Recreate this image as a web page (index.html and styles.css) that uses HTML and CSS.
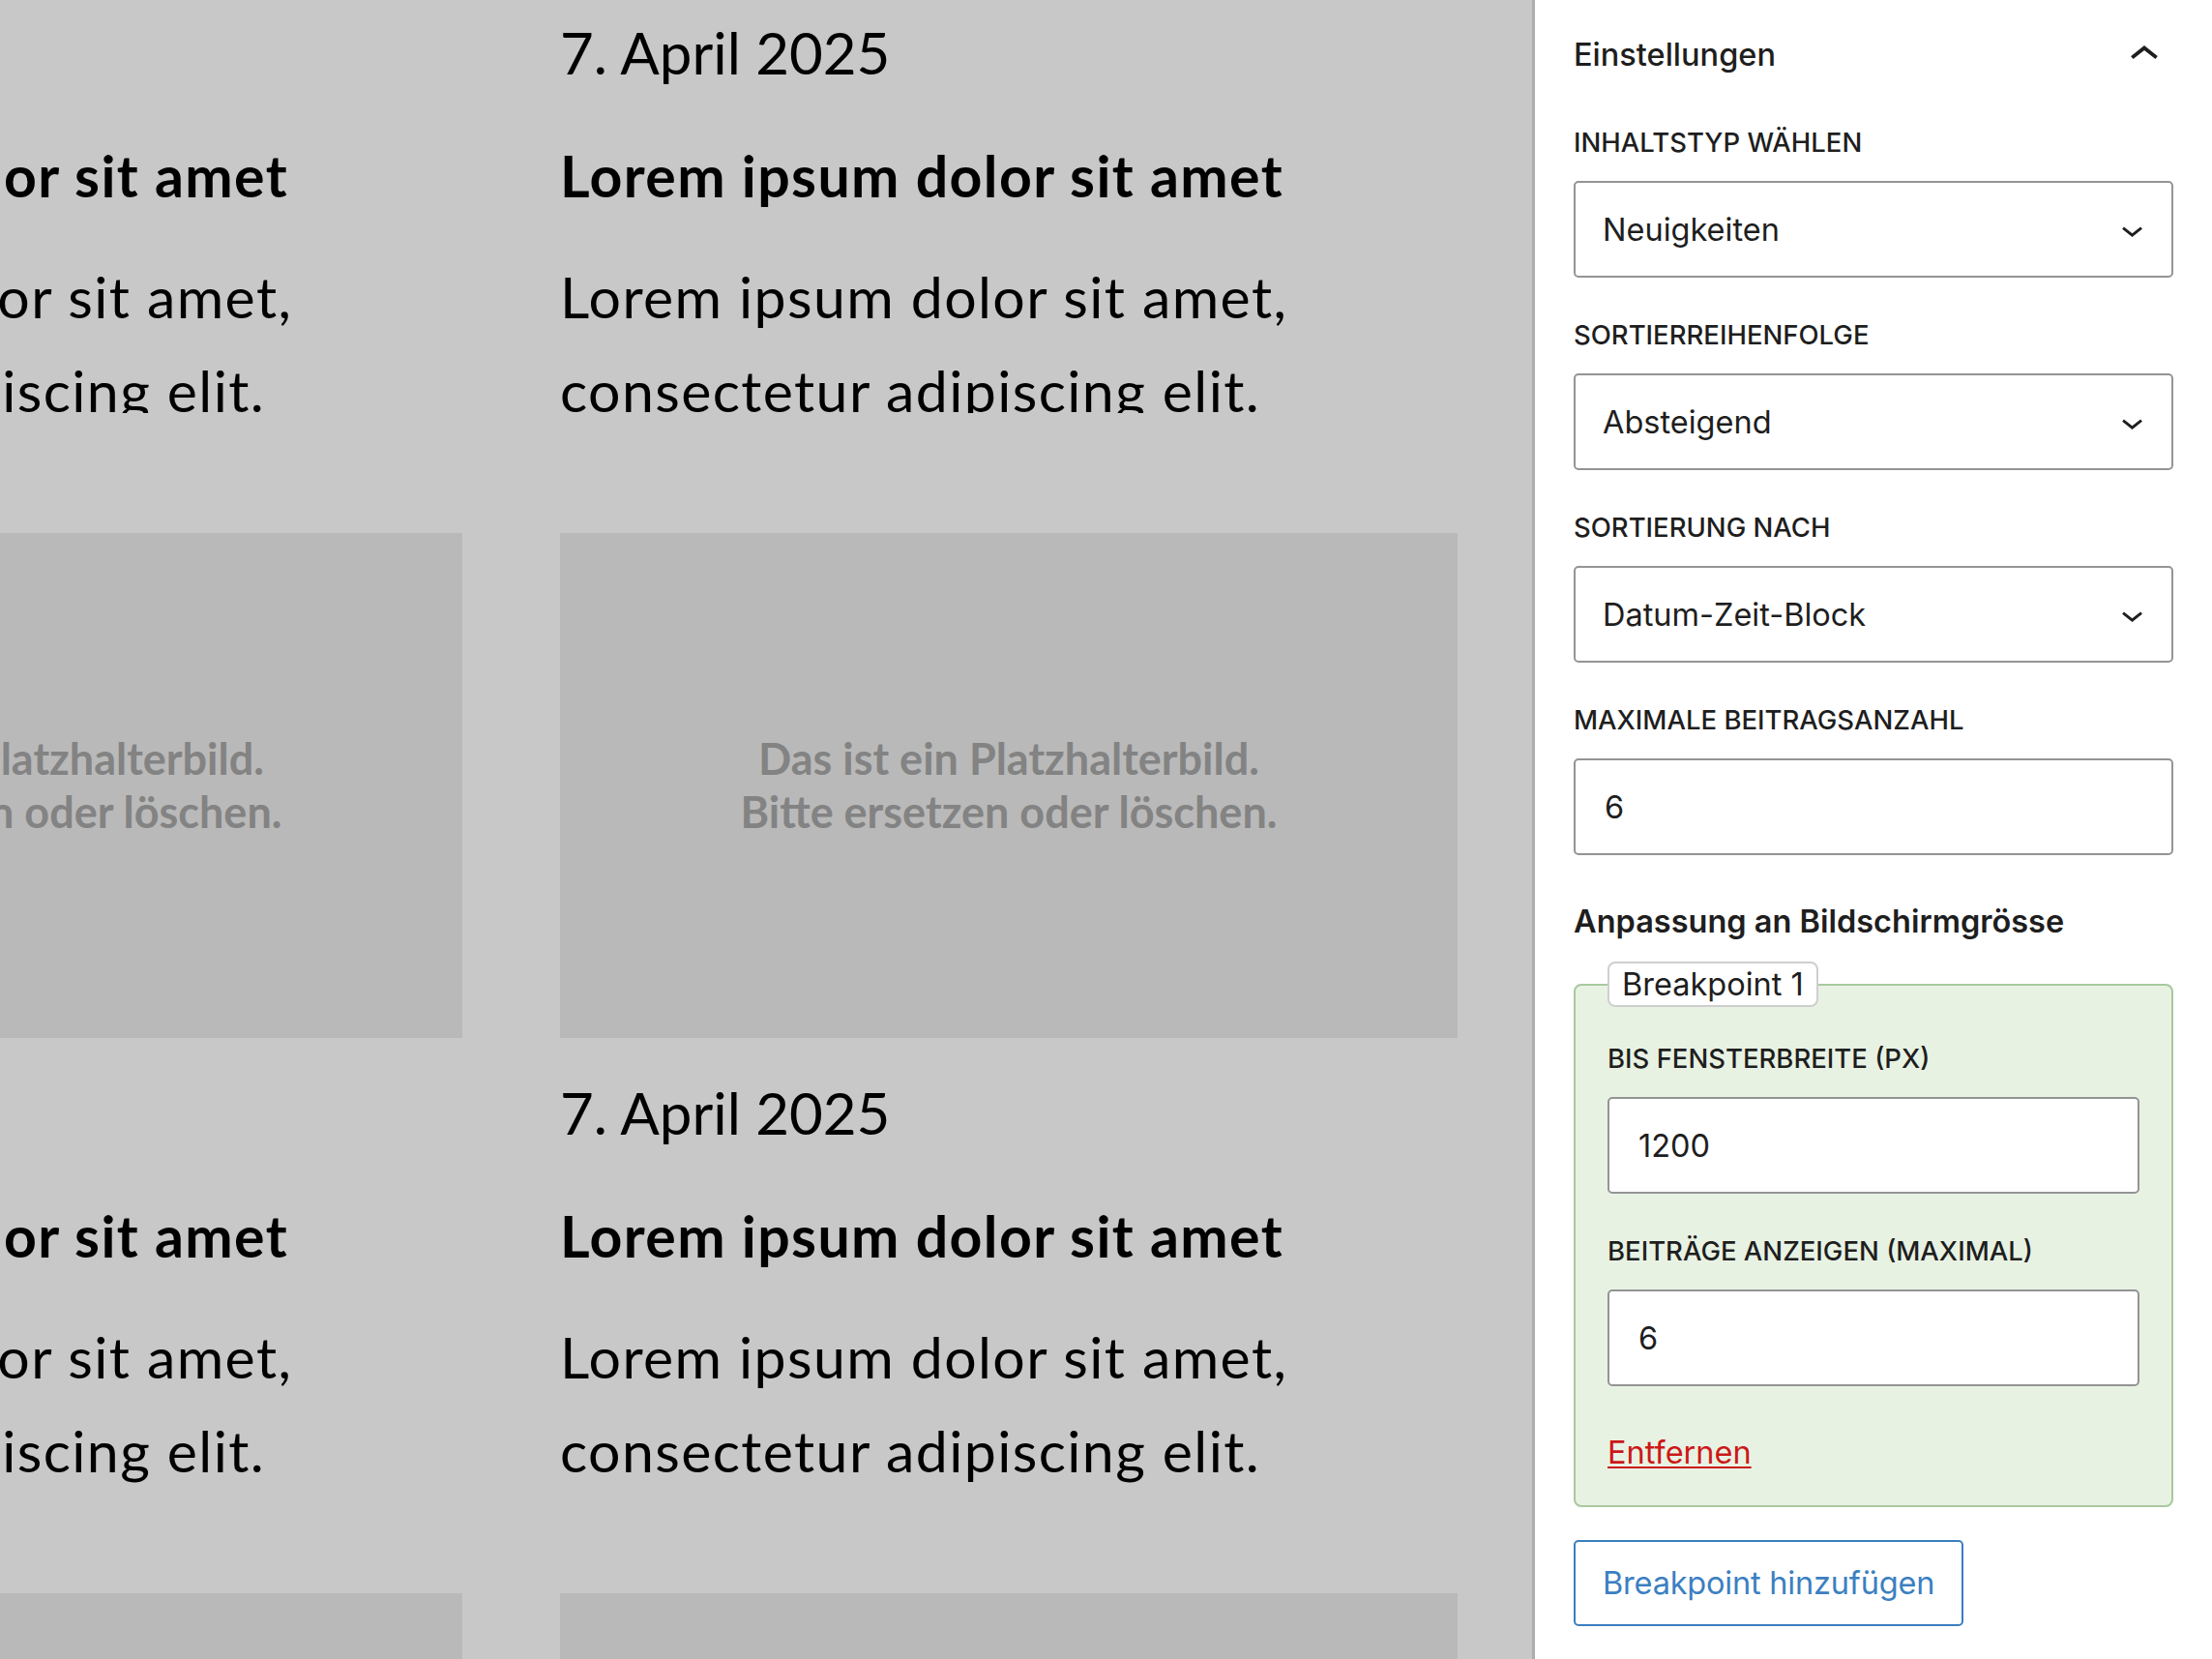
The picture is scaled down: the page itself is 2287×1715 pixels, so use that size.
FILE: index.html
```html
<!DOCTYPE html>
<html lang="de">
<head>
<meta charset="utf-8">
<title>Beitragsliste – Einstellungen</title>
<link rel="stylesheet" href="styles.css">
</head>
<body>
<div class="app">
  <main class="canvas">
    <div class="post-grid">
      <article class="card">
        <p class="card-date">7. April 2025</p>
        <h2 class="card-title">Lorem ipsum dolor sit amet</h2>
        <p class="card-excerpt card-excerpt--clipped">Lorem ipsum dolor sit amet, consectetur adipiscing elit.</p>
        <div class="placeholder"><span>Das ist ein Platzhalterbild.<br>Bitte ersetzen oder löschen.</span></div>
      </article>
      <article class="card">
        <p class="card-date">7. April 2025</p>
        <h2 class="card-title">Lorem ipsum dolor sit amet</h2>
        <p class="card-excerpt card-excerpt--clipped">Lorem ipsum dolor sit amet, consectetur adipiscing elit.</p>
        <div class="placeholder"><span>Das ist ein Platzhalterbild.<br>Bitte ersetzen oder löschen.</span></div>
      </article>
      <article class="card">
        <p class="card-date">7. April 2025</p>
        <h2 class="card-title">Lorem ipsum dolor sit amet</h2>
        <p class="card-excerpt">Lorem ipsum dolor sit amet, consectetur adipiscing elit.</p>
        <div class="placeholder"><span>Das ist ein Platzhalterbild.<br>Bitte ersetzen oder löschen.</span></div>
      </article>
      <article class="card">
        <p class="card-date">7. April 2025</p>
        <h2 class="card-title">Lorem ipsum dolor sit amet</h2>
        <p class="card-excerpt">Lorem ipsum dolor sit amet, consectetur adipiscing elit.</p>
        <div class="placeholder"><span>Das ist ein Platzhalterbild.<br>Bitte ersetzen oder löschen.</span></div>
      </article>
    </div>
  </main>

  <aside class="sidebar">
    <div class="panel-header">
      <h2 class="panel-title">Einstellungen</h2>
      <svg class="icon-up" viewBox="0 0 24 24" aria-hidden="true"><path d="M6.5 12.4L12 8l5.5 4.4-.9 1.2L12 10l-4.6 3.6-1-1.2z"/></svg>
    </div>

    <div class="panel-body">
      <div class="field">
        <label class="field-label">Inhaltstyp wählen</label>
        <div class="select"><span>Neuigkeiten</span><svg class="icon-down" viewBox="0 0 24 24" aria-hidden="true"><path d="M17.5 11.6L12 16l-5.5-4.4.9-1.2L12 14l4.6-3.6 1 1.2z"/></svg></div>
      </div>
      <div class="field">
        <label class="field-label">Sortierreihenfolge</label>
        <div class="select"><span>Absteigend</span><svg class="icon-down" viewBox="0 0 24 24" aria-hidden="true"><path d="M17.5 11.6L12 16l-5.5-4.4.9-1.2L12 14l4.6-3.6 1 1.2z"/></svg></div>
      </div>
      <div class="field">
        <label class="field-label">Sortierung nach</label>
        <div class="select"><span>Datum-Zeit-Block</span><svg class="icon-down" viewBox="0 0 24 24" aria-hidden="true"><path d="M17.5 11.6L12 16l-5.5-4.4.9-1.2L12 14l4.6-3.6 1 1.2z"/></svg></div>
      </div>
      <div class="field">
        <label class="field-label">Maximale Beitragsanzahl</label>
        <input class="text-input" type="text" value="6">
      </div>

      <h3 class="section-heading">Anpassung an Bildschirmgrösse</h3>

      <fieldset class="breakpoint">
        <legend class="breakpoint-legend">Breakpoint 1</legend>
        <div class="field">
          <label class="field-label">Bis Fensterbreite (px)</label>
          <input class="text-input" type="text" value="1200">
        </div>
        <div class="field">
          <label class="field-label">Beiträge anzeigen (maximal)</label>
          <input class="text-input" type="text" value="6">
        </div>
        <a class="remove-link" href="#">Entfernen</a>
      </fieldset>

      <button class="add-button" type="button">Breakpoint hinzufügen</button>
    </div>
  </aside>
</div>
</body>
</html>
```

FILE: styles.css
```css
html, body {
  margin: 0;
  padding: 0;
}

body {
  font-family: Inter, "Noto Sans", sans-serif;
  color: #1e1e1e;
  background: #fff;
}

.app {
  display: flex;
  width: 2287px;
  height: 1715px;
  overflow: hidden;
}

/* ---------- Canvas ---------- */

.canvas {
  flex: none;
  width: 1584px;
  height: 100%;
  overflow: hidden;
  background: #c8c8c8;
  font-family: Lato, "Open Sans", sans-serif;
  color: #000;
}

.post-grid {
  display: grid;
  grid-template-columns: 928px 928px;
  column-gap: 101px;
  row-gap: 41px;
  margin-left: -450px;
  padding-top: 18px;
}

.card {
  display: flex;
  flex-direction: column;
}

.card-date {
  margin: 0;
  font-size: 60px;
  line-height: 72px;
  font-weight: 400;
  white-space: nowrap;
}

.card-title {
  margin: 57px 0 0;
  font-size: 59px;
  line-height: 70px;
  font-weight: 700;
  letter-spacing: 1.4px;
  white-space: nowrap;
}

.card-excerpt {
  margin: 41px 0 0;
  font-size: 59px;
  line-height: 97px;
  font-weight: 400;
  letter-spacing: 1.4px;
}

.card-excerpt--clipped {
  clip-path: inset(0 0 25px 0);
}

.placeholder {
  margin-top: 99px;
  height: 522px;
  background: #b9b9b9;
  display: flex;
  align-items: center;
  justify-content: center;
  text-align: center;
  color: #838383;
  font-size: 45px;
  line-height: 55px;
  font-weight: 700;
}

/* ---------- Sidebar ---------- */

.sidebar {
  flex: none;
  width: 620px;
  padding: 27px 40px 0;
  border-left: 3px solid #adadad;
  background: #fff;
}

.panel-header {
  display: flex;
  align-items: center;
  justify-content: space-between;
  height: 60px;
}

.panel-title {
  margin: 0;
  font-size: 32.5px;
  line-height: 42px;
  font-weight: 500;
}

.icon-up {
  width: 60px;
  height: 60px;
  fill: #1e1e1e;
  flex: none;
}

.panel-body {
  padding-top: 41px;
}

.field {
  margin-bottom: 40px;
}

.field-label {
  display: block;
  font-size: 27.5px;
  line-height: 38.5px;
  font-weight: 500;
  text-transform: uppercase;
  margin-bottom: 20.5px;
}

.select {
  box-sizing: border-box;
  height: 100px;
  display: flex;
  align-items: center;
  justify-content: space-between;
  padding: 0 18px 0 28px;
  border: 2px solid #949494;
  border-radius: 5px;
  background: #fff;
  font-size: 32.5px;
}

.icon-down {
  width: 45px;
  height: 45px;
  fill: #1e1e1e;
  flex: none;
}

.text-input {
  display: block;
  box-sizing: border-box;
  width: 100%;
  height: 100px;
  margin: 0;
  padding: 0 30px;
  border: 2px solid #949494;
  border-radius: 5px;
  background: #fff;
  font-family: Inter, "Noto Sans", sans-serif;
  font-size: 32.5px;
  color: #1e1e1e;
  outline: none;
}

.section-heading {
  margin: 49px 0 21px;
  font-size: 32.5px;
  line-height: 40px;
  font-weight: 600;
}

.breakpoint {
  margin: 0;
  min-width: 0;
  padding: 34px 33px 34px;
  border: 2px solid #a9c99f;
  border-radius: 8px;
  background: #e8f2e3;
}

.breakpoint-legend {
  padding: 0 13px;
  border: 2px solid #cfcfcf;
  border-radius: 8px;
  background: #fff;
  font-size: 32.5px;
  line-height: 43px;
}

.remove-link {
  display: block;
  width: max-content;
  margin-top: 49px;
  font-size: 32.5px;
  line-height: 40px;
  color: #cc1818;
  text-decoration: underline;
  text-decoration-thickness: 2px;
  text-underline-offset: 3px;
}

.add-button {
  display: block;
  margin-top: 34px;
  height: 89px;
  padding: 0 28px;
  border: 2px solid #3b7fc2;
  border-radius: 5px;
  background: #fff;
  color: #3b7fc2;
  font-family: Inter, "Noto Sans", sans-serif;
  font-size: 32.5px;
  letter-spacing: -0.2px;
  cursor: pointer;
}
```
